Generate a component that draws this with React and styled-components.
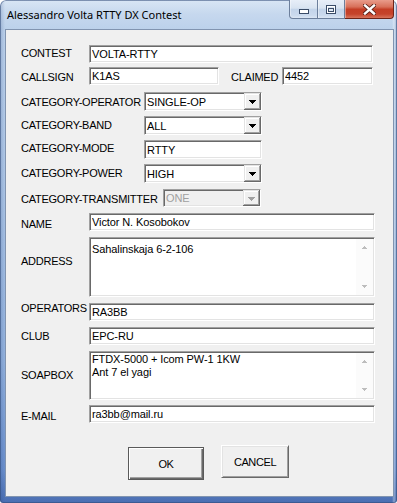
import React from 'react';
import styled, { createGlobalStyle, css } from 'styled-components';

const Global = createGlobalStyle`
  html, body { margin: 0; padding: 0; background: #ffffff; }
  body { width: 397px; height: 503px; overflow: hidden; }
  * { box-sizing: border-box; }
`;

const Window = styled.div`
  width: 397px;
  height: 503px;
  display: flex;
  flex-direction: column;
  padding: 0 3px 6px 5px;
  border-radius: 6px 6px 3px 3px;
  background:
    linear-gradient(to right, rgba(40, 70, 130, 0.22) 0px, rgba(255,255,255,0) 5px, rgba(255,255,255,0) 392px, rgba(255,255,255,0.35) 394px, rgba(40,70,130,0.25) 397px),
    linear-gradient(to bottom, #d9e6f5 0px, #c6d8ee 14px, #bcd1eb 29px, #adc6e6 180px, #92b1dd 360px, #6a8fcd 470px, #4a6eb2 503px);
  box-shadow: inset 0 0 0 1px rgba(50, 75, 120, 0.55);
`;

const TitleBar = styled.div`
  height: 29px;
  flex-shrink: 0;
  display: flex;
  align-items: flex-start;
  padding-left: 2px;
`;

const Title = styled.span`
  margin-top: 7px;
  font-family: "Noto Sans", "Open Sans", sans-serif;
  font-size: 11px;
  line-height: 15px;
  letter-spacing: 0px;
  color: #000;
  white-space: nowrap;
`;

const CaptionButtons = styled.div`
  margin-left: auto;
  display: flex;
  height: 19px;
`;

const CapButton = styled.div`
  height: 19px;
  width: ${p => p.$w}px;
  display: flex;
  align-items: center;
  justify-content: center;
  border: 1px solid ${p => (p.$close ? '#6e2418' : '#6c7f9c')};
  border-top: none;
  ${p => p.$first ? css`border-radius: 0 0 0 4px;` : css`border-left: none;`}
  ${p => p.$close && css`border-radius: 0 0 4px 0;`}
  background: ${p =>
    p.$close
      ? 'linear-gradient(to bottom, #e99c8b 0%, #d8705a 38%, #c43e26 52%, #c5432b 78%, #d8735b 100%)'
      : 'linear-gradient(to bottom, #e7eef8 0%, #d8e3f1 45%, #c3d4ea 52%, #cbdaee 85%, #dbe6f4 100%)'};
  box-shadow: inset 1px 0 0 rgba(255,255,255,0.4);
  padding-top: ${p => p.$pt || 0}px;
`;

const Client = styled.div`
  flex: 1;
  display: flex;
  flex-direction: column;
  background: #f0f0f0;
  border: 1px solid #8194b0;
  padding: 15px 0 0 15px;
`;

const Row = styled.div`
  display: flex;
  align-items: center;
  margin-top: ${p => p.$mt || 0}px;
`;

const Label = styled.span`
  width: ${p => p.$w}px;
  flex-shrink: 0;
  margin-left: ${p => p.$ml || 0}px;
  ${p => (p.$shift || 0) > 0 && css`margin-top: ${p.$shift * 2}px;`}
  ${p => (p.$shift || 0) < 0 && css`margin-bottom: ${-p.$shift * 2}px;`}
  font-family: "Liberation Sans", Arial, sans-serif;
  font-size: 11px;
  line-height: 13px;
  letter-spacing: -0.25px;
  color: #000;
  white-space: nowrap;
`;

const sunken = css`
  border: 1px solid;
  border-color: #a0a0a0 #ffffff #ffffff #a0a0a0;
  box-shadow: inset 1px 1px 0 #696969, inset -1px -1px 0 #e3e3e3;
`;

const fieldFont = css`
  font-family: "Liberation Sans", Arial, sans-serif;
  font-size: 11px;
  letter-spacing: -0.1px;
  color: #000;
`;

const TextField = styled.input`
  ${sunken}
  ${fieldFont}
  width: ${p => p.$w}px;
  height: ${p => p.$h || 18}px;
  flex-shrink: 0;
  margin: 0;
  padding: 0 1px 0 2px;
  background: #fff;
  outline: none;
  line-height: 14px;
`;

const Select = styled.div`
  ${sunken}
  width: ${p => p.$w}px;
  height: ${p => p.$h || 19}px;
  flex-shrink: 0;
  display: flex;
  align-items: stretch;
  background: ${p => (p.$disabled ? '#f0f0f0' : '#fff')};
`;

const SelectText = styled.span`
  ${fieldFont}
  flex: 1;
  display: flex;
  align-items: center;
  padding-left: 2px;
  color: ${p => (p.$disabled ? '#a0a0a0' : '#000')};
  white-space: nowrap;
`;

const DropButton = styled.span`
  width: 17px;
  flex-shrink: 0;
  display: flex;
  align-items: center;
  justify-content: center;
  background: #f0f0f0;
  box-shadow:
    inset -1px -1px 0 #696969,
    inset 1px 1px 0 #e3e3e3,
    inset -2px -2px 0 #a0a0a0,
    inset 2px 2px 0 #ffffff;
  padding: 1px 1px 0 0;
`;

const TextArea = styled.div`
  ${sunken}
  width: ${p => p.$w}px;
  height: ${p => p.$h}px;
  flex-shrink: 0;
  display: flex;
  background: #fff;
`;

const AreaText = styled.div`
  ${fieldFont}
  flex: 1;
  padding: ${p => p.$pt}px 0 0 2px;
  line-height: 13px;
  white-space: pre;
`;

const ScrollBar = styled.div`
  width: 17px;
  flex-shrink: 0;
  margin: 1px 1px 1px 0;
  display: flex;
  flex-direction: column;
  justify-content: space-between;
  background: #fbfbfb;
`;

const ScrollArrow = styled.div`
  height: 17px;
  display: flex;
  align-items: center;
  justify-content: center;
`;

const ButtonRow = styled.div`
  display: flex;
  align-items: flex-start;
  gap: 17px;
  margin-top: 22px;
  padding-left: 107px;
`;

const DialogButton = styled.button`
  width: ${p => p.$w}px;
  height: 33px;
  margin: ${p => p.$mt || 0}px 0 0 0;
  padding: 0;
  font-family: "Liberation Sans", Arial, sans-serif;
  font-size: 11px;
  letter-spacing: -0.4px;
  color: #000;
  background: #f0f0f0;
  outline: none;
  ${p =>
    p.$default
      ? css`
          border: 1px solid #5a5a5a;
          box-shadow: inset 1px 1px 0 #ffffff, inset -1px -1px 0 #696969, inset -2px -2px 0 #a0a0a0;
        `
      : css`
          border: 1px solid;
          border-color: #ffffff #696969 #696969 #ffffff;
          box-shadow: inset 1px 1px 0 #e3e3e3, inset -1px -1px 0 #a0a0a0;
        `}
`;

const ArrowDown = ({ color = '#000' }) => (
  <svg width="7" height="4" viewBox="0 0 7 4" shapeRendering="crispEdges">
    <path d="M0 0h7v1H0z M1 1h5v1H1z M2 2h3v1H2z M3 3h1v1H3z" fill={color} />
  </svg>
);

const SmallArrow = ({ up }) => (
  <svg width="5" height="3" viewBox="0 0 5 3" shapeRendering="crispEdges">
    <path
      d={up ? 'M2 0h1v1H2z M1 1h3v1H1z M0 2h5v1H0z' : 'M0 0h5v1H0z M1 1h3v1H1z M2 2h1v1H2z'}
      fill="#bdbdbd"
    />
  </svg>
);

const MinGlyph = () => (
  <svg width="10" height="5" viewBox="0 0 10 5">
    <rect x="0.5" y="0.5" width="9" height="4" fill="#fff" stroke="#3a4c68" />
  </svg>
);

const MaxGlyph = () => (
  <svg width="10" height="9" viewBox="0 0 10 9" shapeRendering="crispEdges">
    <rect x="0.5" y="0.5" width="9" height="8" fill="none" stroke="#3a4c68" />
    <rect x="1.5" y="1.5" width="7" height="6" fill="none" stroke="#ffffff" />
    <rect x="2.5" y="3.5" width="5" height="3" fill="#dde7f3" stroke="#3a4c68" />
  </svg>
);

const CloseGlyph = () => (
  <svg width="13" height="11" viewBox="0 0 13 11">
    <path d="M2 1.5 L11 9.5 M11 1.5 L2 9.5" stroke="#5a2118" strokeWidth="4.2" strokeLinecap="square" />
    <path d="M2 1.5 L11 9.5 M11 1.5 L2 9.5" stroke="#ffffff" strokeWidth="2.4" strokeLinecap="square" />
  </svg>
);

const Dropdown = ({ w, h, value, disabled }) => (
  <Select $w={w} $h={h} $disabled={disabled}>
    <SelectText $disabled={disabled}>{value}</SelectText>
    <DropButton>
      <ArrowDown color={disabled ? '#a0a0a0' : '#000'} />
    </DropButton>
  </Select>
);

const MultiLine = ({ w, h, pt, children }) => (
  <TextArea $w={w} $h={h}>
    <AreaText $pt={pt}>{children}</AreaText>
    <ScrollBar>
      <ScrollArrow><SmallArrow up /></ScrollArrow>
      <ScrollArrow><SmallArrow /></ScrollArrow>
    </ScrollBar>
  </TextArea>
);

export default function App() {
  return (
    <>
      <Global />
      <Window>
        <TitleBar>
          <Title>Alessandro Volta RTTY DX Contest</Title>
          <CaptionButtons>
            <CapButton $w={29} $first $pt={4}><MinGlyph /></CapButton>
            <CapButton $w={27}><MaxGlyph /></CapButton>
            <CapButton $w={49} $close><CloseGlyph /></CapButton>
          </CaptionButtons>
        </TitleBar>
        <Client>
          <Row>
            <Label $w={68} $shift={-1}>CONTEST</Label>
            <TextField $w={284} defaultValue="VOLTA-RTTY" readOnly />
          </Row>
          <Row $mt={4}>
            <Label $w={68} $shift={1}>CALLSIGN</Label>
            <TextField $w={130} defaultValue="K1AS" readOnly />
            <Label $w={51} $ml={12} $shift={1}>CLAIMED</Label>
            <TextField $w={91} defaultValue="4452" readOnly />
          </Row>
          <Row $mt={7}>
            <Label $w={123} $shift={1}>CATEGORY-OPERATOR</Label>
            <Dropdown w={118} value="SINGLE-OP" />
          </Row>
          <Row $mt={5}>
            <Label $w={123}>CATEGORY-BAND</Label>
            <Dropdown w={118} value="ALL" />
          </Row>
          <Row $mt={5}>
            <Label $w={123} $shift={-1}>CATEGORY-MODE</Label>
            <TextField $w={118} $h={19} defaultValue="RTTY" readOnly />
          </Row>
          <Row $mt={5}>
            <Label $w={123}>CATEGORY-POWER</Label>
            <Dropdown w={118} value="HIGH" />
          </Row>
          <Row $mt={6}>
            <Label $w={142} $shift={1}>CATEGORY-TRANSMITTER</Label>
            <Dropdown w={98} h={18} value="ONE" disabled />
          </Row>
          <Row $mt={6}>
            <Label $w={68} $shift={2}>NAME</Label>
            <TextField $w={286} defaultValue="Victor N. Kosobokov" readOnly />
          </Row>
          <Row $mt={6}>
            <Label $w={68} $shift={-6}>ADDRESS</Label>
            <MultiLine w={286} h={60} pt={5}>Sahalinskaja 6-2-106</MultiLine>
          </Row>
          <Row $mt={5}>
            <Label $w={68} $shift={-3}>OPERATORS</Label>
            <TextField $w={286} defaultValue="RA3BB" readOnly />
          </Row>
          <Row $mt={6}>
            <Label $w={68}>CLUB</Label>
            <TextField $w={286} defaultValue="EPC-RU" readOnly />
          </Row>
          <Row $mt={6}>
            <Label $w={68}>SOAPBOX</Label>
            <MultiLine w={286} h={49} pt={1}>{'FTDX-5000 + Icom PW-1 1KW\nAnt 7 el yagi'}</MultiLine>
          </Row>
          <Row $mt={5}>
            <Label $w={68} $shift={2}>E-MAIL</Label>
            <TextField $w={286} defaultValue="ra3bb@mail.ru" readOnly />
          </Row>
          <ButtonRow>
            <DialogButton $w={76} $mt={2} $default>OK</DialogButton>
            <DialogButton $w={68}>CANCEL</DialogButton>
          </ButtonRow>
        </Client>
      </Window>
    </>
  );
}
